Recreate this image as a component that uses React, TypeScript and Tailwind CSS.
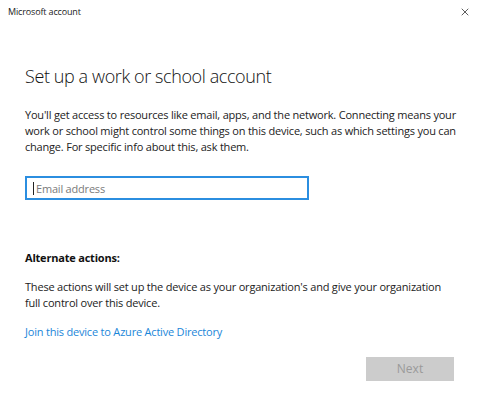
import { X } from "lucide-react";

export default function App() {
  return (
    <div className="flex h-[412px] w-[486px] flex-col bg-white text-[#000] [font-family:'Open_Sans',sans-serif]">
      <div className="flex h-[24px] items-center justify-between pl-[8px] pr-[15px]">
        <span className="text-[9px] tracking-[-0.15px] text-[#222]">Microsoft account</span>
        <X className="h-[12px] w-[12px] text-[#333]" strokeWidth={1.6} />
      </div>

      <div className="flex flex-1 flex-col px-[25px]">
        <h1 className="mt-[38px] text-[18px] font-light leading-[28px] tracking-[-0.4px] text-[#111]">
          Set up a work or school account
        </h1>
        <p className="mt-[17px] text-[11px] leading-[16px] tracking-[-0.2px] text-[#222]">
          You'll get access to resources like email, apps, and the network. Connecting means your
          work or school might control some things on this device, such as which settings you can
          change. For specific info about this, ask them.
        </p>

        <div className="relative mt-[21px] w-[284px]">
          <input
            type="text"
            placeholder="Email address"
            className="block h-[24px] w-full border-2 border-[#2b8ee0] pl-[9px] pr-[6px] text-[11px] tracking-[-0.2px] text-[#222] outline-none placeholder:text-[#7a7a7a]"
          />
          <span className="absolute left-[8px] top-[6px] h-[13px] w-px bg-[#222]" />
        </div>

        <div className="mt-[50px] text-[11px] font-bold leading-[16px] tracking-[-0.2px] text-[#111]">
          Alternate actions:
        </div>
        <p className="mt-[13px] max-w-[428px] text-[11px] leading-[16px] tracking-[-0.2px] text-[#222]">
          These actions will set up the device as your organization's and give your organization
          full control over this device.
        </p>
        <a href="#" className="mt-[13px] text-[11px] leading-[16px] tracking-[-0.2px] text-[#1a86d9]">
          Join this device to Azure Active Directory
        </a>

        <div className="mt-[17px] flex justify-end pr-[7px]">
          <button className="h-[24px] w-[88px] bg-[#cccccc] text-[12px] text-[#9a9a9a]">Next</button>
        </div>
      </div>
    </div>
  );
}
